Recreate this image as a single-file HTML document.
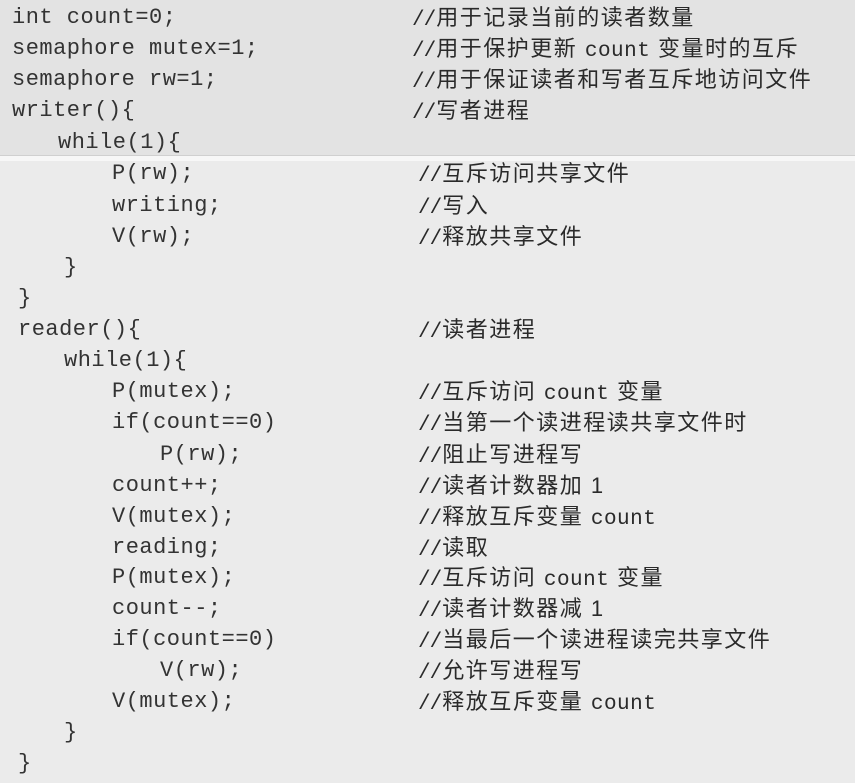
<!DOCTYPE html>
<html><head><meta charset="utf-8"><style>
html,body{margin:0;padding:0;width:855px;height:783px;overflow:hidden;background:#ebebeb;}
.top{position:absolute;left:0;top:0;width:855px;height:155px;background:#e3e3e3;}
.sep{position:absolute;left:0;top:155px;width:855px;height:5px;background:#f7f7f7;border-top:1px solid #d0d0d0;}
.l{position:absolute;height:30px;line-height:30px;white-space:pre;font-family:"Liberation Mono","Noto Sans CJK SC",monospace;font-size:22px;letter-spacing:0.5px;color:#333;}
.c{position:absolute;height:30px;line-height:30px;white-space:pre;font-family:"Liberation Sans","Noto Sans CJK SC",sans-serif;font-size:22px;color:#2a2a2a;letter-spacing:1.5px;}
.c .m{font-family:"Liberation Mono",monospace;font-size:21px;letter-spacing:0.5px;}
.c .s{font-family:"Liberation Mono",monospace;font-size:21px;letter-spacing:-1px;margin-right:1px;}
</style></head><body>
<div class="top"></div><div class="sep"></div>

<div class="l" style="left:12px;top:3px">int count=0;</div>
<div class="l" style="left:12px;top:34px">semaphore mutex=1;</div>
<div class="l" style="left:12px;top:65px">semaphore rw=1;</div>
<div class="l" style="left:12px;top:96px">writer(){</div>
<div class="l" style="left:58px;top:128px">while(1){</div>
<div class="l" style="left:112px;top:159px">P(rw);</div>
<div class="l" style="left:112px;top:191px">writing;</div>
<div class="l" style="left:112px;top:222px">V(rw);</div>
<div class="l" style="left:64px;top:253px">}</div>
<div class="l" style="left:18px;top:284px">}</div>
<div class="l" style="left:18px;top:315px">reader(){</div>
<div class="l" style="left:64px;top:346px">while(1){</div>
<div class="l" style="left:112px;top:377px">P(mutex);</div>
<div class="l" style="left:112px;top:408px">if(count==0)</div>
<div class="l" style="left:160px;top:440px">P(rw);</div>
<div class="l" style="left:112px;top:471px">count++;</div>
<div class="l" style="left:112px;top:502px">V(mutex);</div>
<div class="l" style="left:112px;top:533px">reading;</div>
<div class="l" style="left:112px;top:563px">P(mutex);</div>
<div class="l" style="left:112px;top:594px">count--;</div>
<div class="l" style="left:112px;top:625px">if(count==0)</div>
<div class="l" style="left:160px;top:656px">V(rw);</div>
<div class="l" style="left:112px;top:687px">V(mutex);</div>
<div class="l" style="left:64px;top:718px">}</div>
<div class="l" style="left:18px;top:749px">}</div>

<div class="c" style="left:412px;top:3px"><span class="s">//</span>用于记录当前的读者数量</div>
<div class="c" style="left:412px;top:34px"><span class="s">//</span>用于保护更新 <span class="m">count</span> 变量时的互斥</div>
<div class="c" style="left:412px;top:65px"><span class="s">//</span>用于保证读者和写者互斥地访问文件</div>
<div class="c" style="left:412px;top:96px"><span class="s">//</span>写者进程</div>
<div class="c" style="left:418px;top:159px"><span class="s">//</span>互斥访问共享文件</div>
<div class="c" style="left:418px;top:191px"><span class="s">//</span>写入</div>
<div class="c" style="left:418px;top:222px"><span class="s">//</span>释放共享文件</div>
<div class="c" style="left:418px;top:315px"><span class="s">//</span>读者进程</div>
<div class="c" style="left:418px;top:377px"><span class="s">//</span>互斥访问 <span class="m">count</span> 变量</div>
<div class="c" style="left:418px;top:408px"><span class="s">//</span>当第一个读进程读共享文件时</div>
<div class="c" style="left:418px;top:440px"><span class="s">//</span>阻止写进程写</div>
<div class="c" style="left:418px;top:471px"><span class="s">//</span>读者计数器加 1</div>
<div class="c" style="left:418px;top:502px"><span class="s">//</span>释放互斥变量 <span class="m">count</span></div>
<div class="c" style="left:418px;top:533px"><span class="s">//</span>读取</div>
<div class="c" style="left:418px;top:563px"><span class="s">//</span>互斥访问 <span class="m">count</span> 变量</div>
<div class="c" style="left:418px;top:594px"><span class="s">//</span>读者计数器减 1</div>
<div class="c" style="left:418px;top:625px"><span class="s">//</span>当最后一个读进程读完共享文件</div>
<div class="c" style="left:418px;top:656px"><span class="s">//</span>允许写进程写</div>
<div class="c" style="left:418px;top:687px"><span class="s">//</span>释放互斥变量 <span class="m">count</span></div>
</body></html>
